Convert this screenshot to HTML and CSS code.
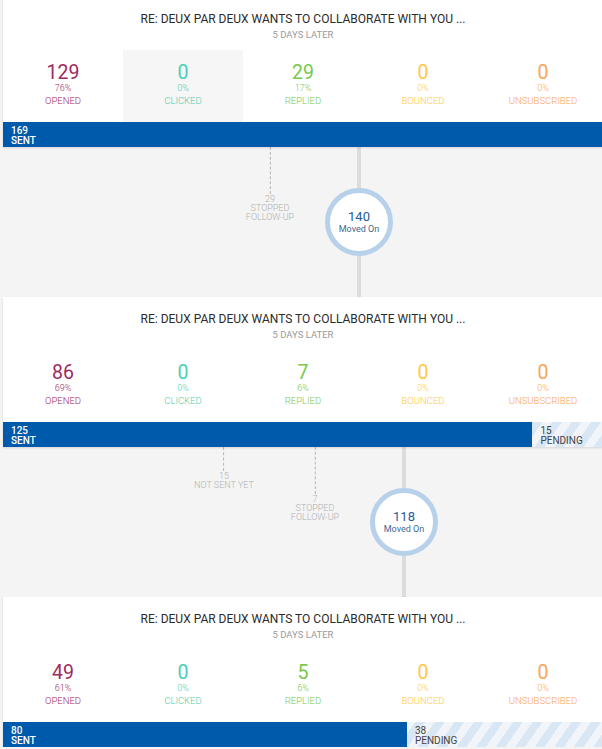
FILE: index.html
```html
<!DOCTYPE html>
<html>
<head>
<meta charset="utf-8">
<link rel="stylesheet" href="styles.css">
</head>
<body>
<div class="flow">
  <section class="card card-first">
    <div class="title">RE: DEUX PAR DEUX WANTS TO COLLABORATE WITH YOU ...</div>
    <div class="delay">5 DAYS LATER</div>
    <div class="stats">
      <div class="stat opened"><div class="num">129</div><div class="pct">76%</div><div class="lbl">OPENED</div></div>
      <div class="stat clicked active"><div class="num">0</div><div class="pct">0%</div><div class="lbl">CLICKED</div></div>
      <div class="stat replied"><div class="num">29</div><div class="pct">17%</div><div class="lbl">REPLIED</div></div>
      <div class="stat bounced"><div class="num">0</div><div class="pct">0%</div><div class="lbl">BOUNCED</div></div>
      <div class="stat unsub"><div class="num">0</div><div class="pct">0%</div><div class="lbl">UNSUBSCRIBED</div></div>
    </div>
    <div class="bar">
      <div class="sent" style="flex: 169"><span>169</span><span>SENT</span></div>
    </div>
  </section>

  <div class="connector">
    <div class="trunk" style="left: 356px"></div>
    <div class="drop" style="left: 267px"><div class="dash" style="height: 47px"></div><div class="dtext">29<br>STOPPED<br>FOLLOW-UP</div></div>
    <div class="bubble" style="left: 356px"><div class="bnum">140</div><div class="blbl">Moved On</div></div>
  </div>

  <section class="card">
    <div class="title">RE: DEUX PAR DEUX WANTS TO COLLABORATE WITH YOU ...</div>
    <div class="delay">5 DAYS LATER</div>
    <div class="stats">
      <div class="stat opened"><div class="num">86</div><div class="pct">69%</div><div class="lbl">OPENED</div></div>
      <div class="stat clicked"><div class="num">0</div><div class="pct">0%</div><div class="lbl">CLICKED</div></div>
      <div class="stat replied"><div class="num">7</div><div class="pct">6%</div><div class="lbl">REPLIED</div></div>
      <div class="stat bounced"><div class="num">0</div><div class="pct">0%</div><div class="lbl">BOUNCED</div></div>
      <div class="stat unsub"><div class="num">0</div><div class="pct">0%</div><div class="lbl">UNSUBSCRIBED</div></div>
    </div>
    <div class="bar">
      <div class="sent" style="flex: 125"><span>125</span><span>SENT</span></div>
      <div class="pending" style="flex: 15"><span>15</span><span>PENDING</span></div>
    </div>
  </section>

  <div class="connector">
    <div class="trunk" style="left: 401px"></div>
    <div class="drop" style="left: 221px"><div class="dash" style="height: 24px"></div><div class="dtext">15<br>NOT SENT YET</div></div>
    <div class="drop" style="left: 312px"><div class="dash" style="height: 47px"></div><div class="dtext">7<br>STOPPED<br>FOLLOW-UP</div></div>
    <div class="bubble" style="left: 401px"><div class="bnum">118</div><div class="blbl">Moved On</div></div>
  </div>

  <section class="card">
    <div class="title">RE: DEUX PAR DEUX WANTS TO COLLABORATE WITH YOU ...</div>
    <div class="delay">5 DAYS LATER</div>
    <div class="stats">
      <div class="stat opened"><div class="num">49</div><div class="pct">61%</div><div class="lbl">OPENED</div></div>
      <div class="stat clicked"><div class="num">0</div><div class="pct">0%</div><div class="lbl">CLICKED</div></div>
      <div class="stat replied"><div class="num">5</div><div class="pct">6%</div><div class="lbl">REPLIED</div></div>
      <div class="stat bounced"><div class="num">0</div><div class="pct">0%</div><div class="lbl">BOUNCED</div></div>
      <div class="stat unsub"><div class="num">0</div><div class="pct">0%</div><div class="lbl">UNSUBSCRIBED</div></div>
    </div>
    <div class="bar">
      <div class="sent" style="flex: 80"><span>80</span><span>SENT</span></div>
      <div class="pending" style="flex: 38"><span>38</span><span>PENDING</span></div>
    </div>
  </section>
</div>
</body>
</html>
```

FILE: styles.css
```css
html, body {
  margin: 0;
  padding: 0;
  background: #f4f4f4;
  font-family: Roboto, "Liberation Sans", sans-serif;
  overflow: hidden;
}

.flow {
  width: 600px;
  margin-left: 3px;
}

.card {
  background: #fff;
  padding-top: 14px;
  box-shadow: 0 1px 2px rgba(0, 0, 0, 0.12);
  position: relative;
  z-index: 1;
}

.card-first {
  margin-top: -3px;
}

.title {
  text-align: center;
  font-size: 12px;
  line-height: 16px;
  color: #2b2b2b;
  font-weight: 400;
}

.delay {
  text-align: center;
  font-size: 9.5px;
  line-height: 15px;
  color: #999;
}

.stats {
  display: grid;
  grid-template-columns: repeat(5, 1fr);
  margin-top: 8px;
  height: 72px;
}

.stat {
  text-align: center;
  padding-top: 13px;
}

.stat.active {
  background: #f6f6f6;
}

.num {
  font-size: 19.5px;
  line-height: 20px;
}

.pct {
  font-size: 9px;
  line-height: 11px;
  font-weight: 300;
}

.lbl {
  font-size: 9.5px;
  line-height: 13px;
  font-weight: 300;
}

.opened .num, .opened .pct, .opened .lbl { color: #9e2b5e; }
.clicked .num, .clicked .pct, .clicked .lbl { color: #4ccfb2; }
.replied .num, .replied .pct, .replied .lbl { color: #77c94a; }
.bounced .num, .bounced .pct, .bounced .lbl { color: #ffc848; }
.unsub .num, .unsub .pct, .unsub .lbl { color: #f9a557; }

.bar {
  display: flex;
  height: 25px;
}

.sent, .pending {
  display: flex;
  flex-direction: column;
  padding: 4px 0 0 8px;
  font-size: 10px;
  line-height: 10px;
  min-width: 0;
}

.sent {
  background: #005aab;
  color: #fff;
  font-weight: 500;
}

.pending {
  color: #444;
  background: repeating-linear-gradient(
    -55deg,
    #d9e6f3 0px,
    #d9e6f3 8px,
    #f1f5fa 8px,
    #f1f5fa 16px
  );
}

.connector {
  position: relative;
  height: 150px;
}

.trunk {
  position: absolute;
  top: 0;
  bottom: 0;
  width: 4px;
  margin-left: -2px;
  background: #dcdcdc;
}

.drop {
  position: absolute;
  top: 0;
  transform: translateX(-50%);
  display: flex;
  flex-direction: column;
  align-items: center;
}

.dash {
  width: 0;
  border-left: 1px dashed #b5b5b5;
}

.dtext {
  margin-top: 1px;
  text-align: center;
  font-size: 9px;
  line-height: 9px;
  color: #b0b0b0;
  font-weight: 300;
  white-space: nowrap;
}

.bubble {
  position: absolute;
  top: 41px;
  width: 58px;
  height: 58px;
  margin-left: -34px;
  border: 5px solid #b8d1ea;
  border-radius: 50%;
  background: #fff;
  display: flex;
  flex-direction: column;
  align-items: center;
  justify-content: center;
}

.bnum {
  font-size: 13px;
  line-height: 14px;
  color: #245c97;
}

.blbl {
  font-size: 9px;
  line-height: 10px;
  color: #3f6891;
}
```
